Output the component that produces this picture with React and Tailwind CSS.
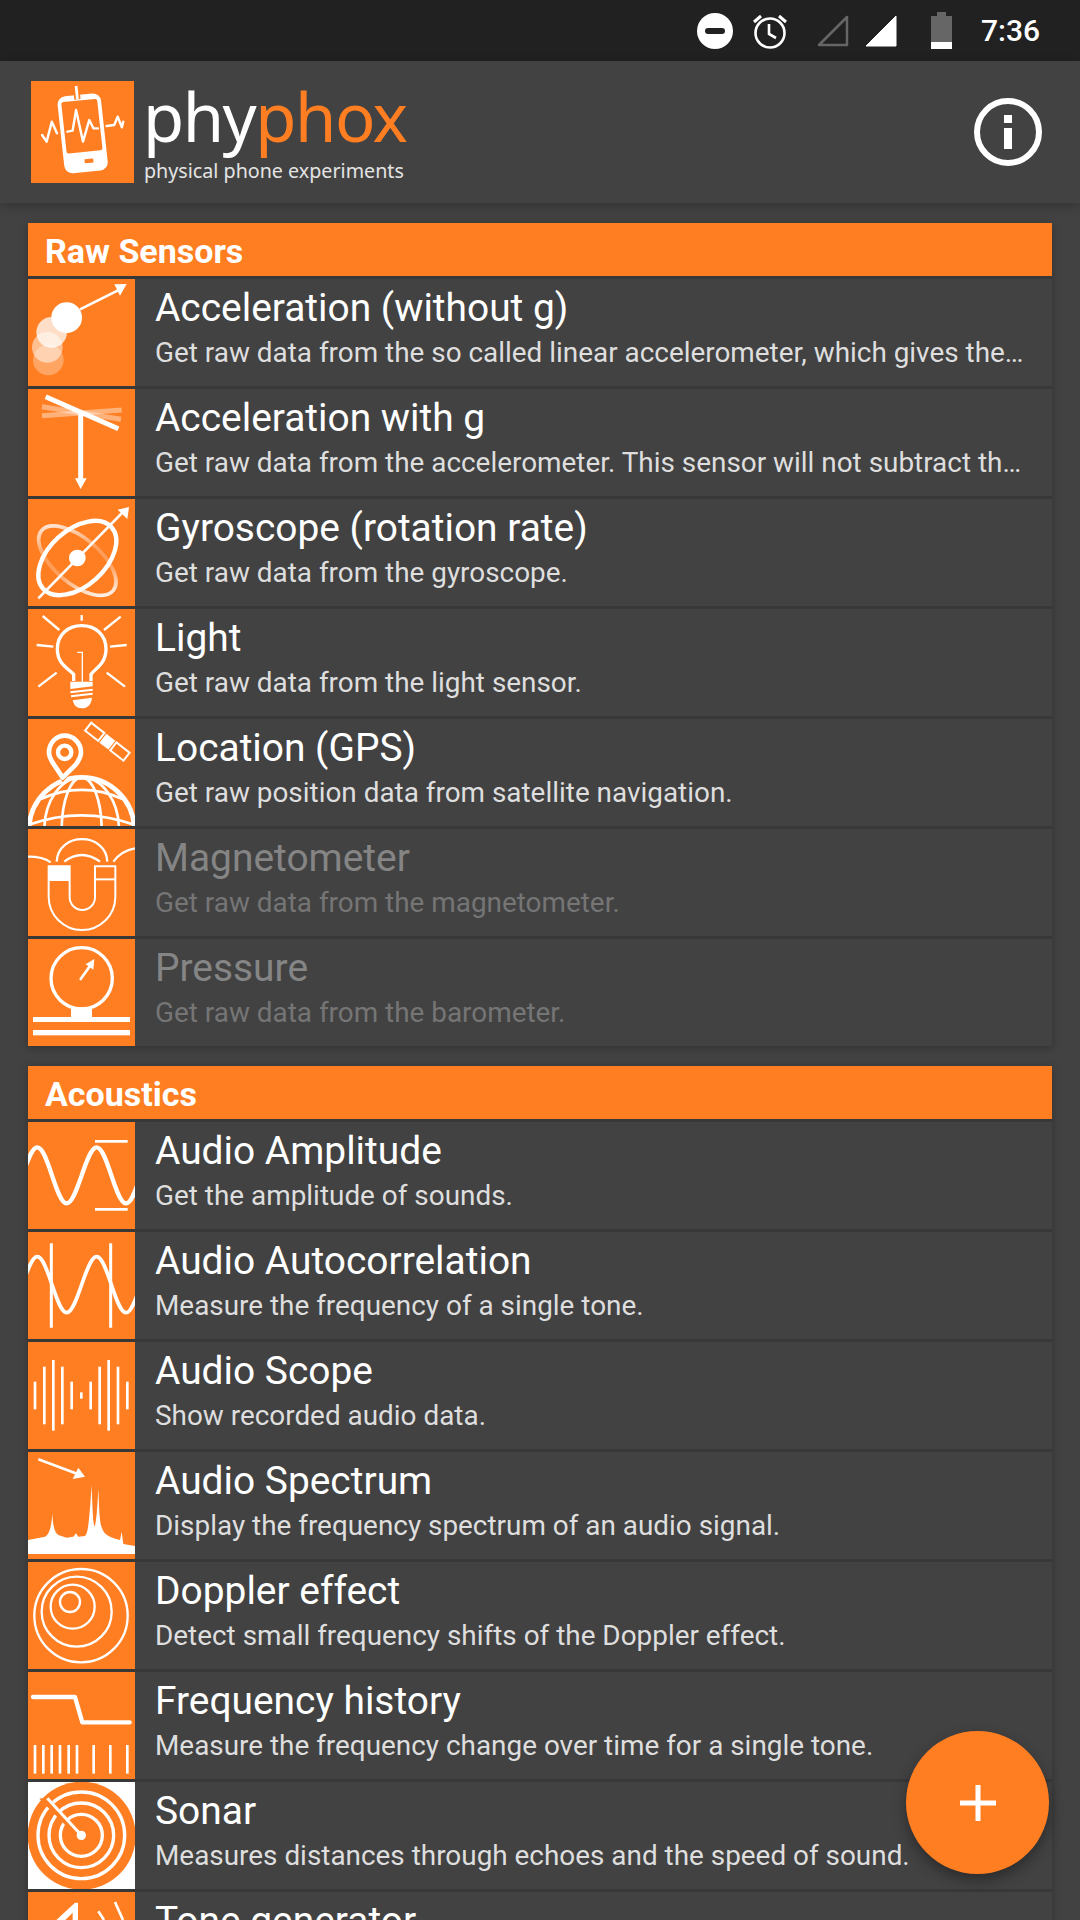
import React from 'react';

const W = 'white';

const Svg = ({ children, white }) => (
  <svg viewBox="0 0 321 321" className={`w-[107px] h-[107px] shrink-0 ${white ? 'bg-white' : 'bg-[#ff7e22]'}`}>
    {children}
  </svg>
);

const AccelIcon = () => (
  <Svg>
    <circle cx="61" cy="243" r="46" fill={W} opacity="0.3" />
    <circle cx="58" cy="205" r="46" fill={W} opacity="0.5" />
    <circle cx="71" cy="160" r="46" fill={W} opacity="0.75" />
    <circle cx="116" cy="116" r="46" fill={W} />
    <path d="M156 91 L276 31" stroke={W} strokeWidth="8" />
    <path d="M296 15 L259 16 L276 50 Z" fill={W} />
  </Svg>
);

const GravityIcon = () => (
  <Svg>
    <path d="M42 53 L279 91" stroke={W} strokeWidth="15" opacity="0.4" />
    <path d="M42 80 L281 63" stroke={W} strokeWidth="15" opacity="0.4" />
    <path d="M53 23 L271 119" stroke={W} strokeWidth="15" />
    <path d="M158 72 V270" stroke={W} strokeWidth="15" />
    <path d="M141 268 H176 L158 300 Z" fill={W} />
  </Svg>
);

const GyroIcon = () => (
  <Svg>
    <defs>
      <linearGradient id="gyroFade" gradientUnits="userSpaceOnUse" x1="40" y1="90" x2="250" y2="270">
        <stop offset="0" stopColor={W} stopOpacity="0.95" />
        <stop offset="0.42" stopColor={W} stopOpacity="0.25" />
        <stop offset="0.62" stopColor={W} stopOpacity="0.25" />
        <stop offset="1" stopColor={W} stopOpacity="1" />
      </linearGradient>
    </defs>
    <ellipse cx="148" cy="185" rx="140" ry="68" transform="rotate(40 148 185)" fill="none" stroke="url(#gyroFade)" strokeWidth="11" />
    <ellipse cx="148" cy="177" rx="138" ry="84" transform="rotate(-42 148 177)" fill="none" stroke={W} strokeWidth="13" />
    <path d="M31 298 L286 38" stroke={W} strokeWidth="8" />
    <path d="M303 24 L269 32 L298 60 Z" fill={W} />
    <circle cx="148" cy="177" r="25" fill={W} />
  </Svg>
);

const LightIcon = () => (
  <Svg>
    <path
      d="M137 216 V196 C120 178 88 165 88 120 C88 75 122 50 161 50 C200 50 234 75 234 120 C234 165 202 178 189 196 V216"
      fill="none"
      stroke={W}
      strokeWidth="10"
    />
    <path d="M148 130 H163 V222" fill="none" stroke={W} strokeWidth="4" />
    <path d="M127 218 H194 V232 L127 240 Z" fill={W} />
    <path d="M127 250 L194 242 M129 262 L194 254" stroke={W} strokeWidth="6" />
    <path d="M134 274 L192 266 C190 285 180 298 160 298 C146 298 138 290 134 274 Z" fill={W} />
    <path
      d="M44 21 L94 63 M161 18 V35 M278 23 L228 63 M26 108 L76 113 M296 108 L246 113 M86 191 L31 233 M236 191 L291 233"
      stroke={W}
      strokeWidth="7"
    />
  </Svg>
);

const LocationIcon = () => (
  <Svg>
    <g fill="none" stroke={W}>
      <circle cx="161" cy="333" r="158" strokeWidth="14" />
      <ellipse cx="161" cy="333" rx="112" ry="158" strokeWidth="8" />
      <ellipse cx="161" cy="333" rx="60" ry="158" strokeWidth="8" />
      <path d="M38 240 Q161 185 284 240" strokeWidth="8" />
      <path d="M0 318 Q161 260 321 318" strokeWidth="8" />
    </g>
    <path
      d="M104 190 L72 142 C62 126 56 114 56 100 C56 68 80 43 110 43 C140 43 166 68 166 100 C166 114 160 126 148 142 Z"
      fill="#ff7e22"
    />
    <path
      d="M104 176 L76 134 C68 122 63 112 63 100 C63 72 84 50 110 50 C136 50 159 72 159 100 C159 112 154 122 144 136 Z"
      fill="none"
      stroke={W}
      strokeWidth="14"
      strokeLinejoin="round"
    />
    <circle cx="110" cy="100" r="20" fill="none" stroke={W} strokeWidth="13" />
    <g transform="rotate(38 238 68)">
      <rect x="221" y="51" width="34" height="34" fill={W} />
      <rect x="165" y="53" width="50" height="30" fill="none" stroke={W} strokeWidth="6" />
      <rect x="261" y="53" width="50" height="30" fill="none" stroke={W} strokeWidth="6" />
    </g>
  </Svg>
);

const MagnetIcon = () => (
  <Svg>
    <g fill="none" stroke={W} strokeWidth="7">
      <path d="M86 98 C90 8 234 8 238 98" />
      <path d="M109 98 Q161 58 216 98" />
      <path d="M0 83 Q45 83 68 100" />
      <path d="M321 58 Q280 65 256 98" />
      <path d="M62 112 V203 A100 100 0 0 0 262 203 V112 H201 V205 A38 38 0 0 1 125 205 V112 Z" strokeWidth="6" />
      <path d="M202 151 H262" strokeWidth="6" />
    </g>
    <rect x="61" y="111" width="63" height="45" fill={W} />
  </Svg>
);

const PressureIcon = () => (
  <Svg>
    <circle cx="161" cy="118" r="92" fill="none" stroke={W} strokeWidth="10" />
    <path d="M158 120 L188 78" stroke={W} strokeWidth="8" strokeLinecap="round" />
    <path d="M199 60 L196 92 L173 76 Z" fill={W} />
    <rect x="129" y="205" width="63" height="30" fill={W} />
    <rect x="15" y="234" width="291" height="15" fill={W} />
    <rect x="15" y="273" width="291" height="16" fill={W} />
  </Svg>
);

const sine = 'M-61 244 C-29 244 -4 76 28 76 C60 76 84 244 116 244 C148 244 174 76 206 76 C238 76 262 244 294 244 C326 244 350 76 382 76';

const AmplitudeIcon = () => (
  <Svg>
    <path d={sine} fill="none" stroke={W} strokeWidth="13" />
    <path d="M201 58 H299 M201 262 H299" stroke={W} strokeWidth="8" />
  </Svg>
);

const AutocorrIcon = () => (
  <Svg>
    <path d={sine} fill="none" stroke={W} strokeWidth="11" transform="translate(0 -2)" />
    <path d="M70 34 V287 M248 34 V287" stroke={W} strokeWidth="9" />
  </Svg>
);

const scopeLines = [
  [21, 119, 202], [49, 74, 247], [76, 54, 266], [103, 74, 247], [131, 119, 202], [160, 151, 170],
  [188, 119, 202], [215, 74, 247], [242, 54, 266], [270, 74, 247], [298, 119, 202],
];

const ScopeIcon = () => (
  <Svg>
    {scopeLines.map(([x, a, b]) => (
      <path key={x} d={`M${x} ${a} V${b}`} stroke={W} strokeWidth="8" />
    ))}
  </Svg>
);

const SpectrumIcon = () => (
  <Svg>
    <path d="M31 22 L155 68" stroke={W} strokeWidth="8" />
    <path d="M171 74 L151 47 L134 81 Z" fill={W} />
    <path
      d="M0 264 L51 254 C60 250 70 235 73 184 C75 230 82 242 91 249 L116 257 L136 254 L144 244 L151 254 L171 252 C178 245 182 235 191 99 C194 190 196 215 200 224 C205 210 208 170 211 109 C214 190 216 215 222 228 C228 245 236 254 276 264 L281 239 L286 276 L321 282 V306 H0 Z"
      fill={W}
    />
  </Svg>
);

const DopplerIcon = () => (
  <Svg>
    <g fill="none" stroke={W} strokeWidth="7">
      <circle cx="159" cy="161" r="140" />
      <circle cx="146" cy="149" r="105" />
      <circle cx="134" cy="134" r="66" />
      <circle cx="126" cy="120" r="30" />
    </g>
  </Svg>
);

const ticks = [21, 46, 71, 96, 122, 147, 197, 247, 298];

const HistoryIcon = () => (
  <Svg>
    <path d="M15 75 H141 L163 151 H305" fill="none" stroke={W} strokeWidth="13" strokeLinecap="round" strokeLinejoin="round" />
    {ticks.map((x) => (
      <path key={x} d={`M${x} 219 V305`} stroke={W} strokeWidth="8" />
    ))}
  </Svg>
);

const SonarIcon = () => (
  <Svg white>
    <circle cx="161" cy="161" r="162" fill="#ff7e22" />
    <g fill="none" stroke={W} strokeWidth="10">
      <circle cx="160" cy="160" r="130" />
      <circle cx="160" cy="160" r="97" />
      <circle cx="160" cy="160" r="63" />
    </g>
    <path d="M62 45 L34 50 L112 130 L160 160 Z" fill="#ff7e22" />
    <path d="M58 49 L160 160" stroke={W} strokeWidth="9" />
    <circle cx="160" cy="160" r="14" fill={W} />
  </Svg>
);

const ToneIcon = () => (
  <Svg>
    <path d="M85 84 L141 32 H150 V84 H134 V62 L112 84 Z" fill={W} />
    <path d="M211 58 L228 84 M261 30 L285 84" stroke={W} strokeWidth="8" />
  </Svg>
);

const sections = [
  {
    title: 'Raw Sensors',
    rows: [
      { icon: AccelIcon, name: 'Acceleration (without g)', desc: 'Get raw data from the so called linear accelerometer, which gives the acceleration without gravity.' },
      { icon: GravityIcon, name: 'Acceleration with g', desc: 'Get raw data from the accelerometer. This sensor will not subtract the gravity.' },
      { icon: GyroIcon, name: 'Gyroscope (rotation rate)', desc: 'Get raw data from the gyroscope.' },
      { icon: LightIcon, name: 'Light', desc: 'Get raw data from the light sensor.' },
      { icon: LocationIcon, name: 'Location (GPS)', desc: 'Get raw position data from satellite navigation.' },
      { icon: MagnetIcon, name: 'Magnetometer', desc: 'Get raw data from the magnetometer.', off: true },
      { icon: PressureIcon, name: 'Pressure', desc: 'Get raw data from the barometer.', off: true },
    ],
  },
  {
    title: 'Acoustics',
    rows: [
      { icon: AmplitudeIcon, name: 'Audio Amplitude', desc: 'Get the amplitude of sounds.' },
      { icon: AutocorrIcon, name: 'Audio Autocorrelation', desc: 'Measure the frequency of a single tone.' },
      { icon: ScopeIcon, name: 'Audio Scope', desc: 'Show recorded audio data.' },
      { icon: SpectrumIcon, name: 'Audio Spectrum', desc: 'Display the frequency spectrum of an audio signal.' },
      { icon: DopplerIcon, name: 'Doppler effect', desc: 'Detect small frequency shifts of the Doppler effect.' },
      { icon: HistoryIcon, name: 'Frequency history', desc: 'Measure the frequency change over time for a single tone.' },
      { icon: SonarIcon, name: 'Sonar', desc: 'Measures distances through echoes and the speed of sound.' },
      { icon: ToneIcon, name: 'Tone generator', desc: 'Generate a tone with a given frequency.' },
    ],
  },
];

const StatusBar = () => (
  <div className="h-[61px] shrink-0 bg-[#212121] flex items-center justify-end">
    <svg viewBox="0 0 36 36" className="w-[36px] h-[36px] mr-[19px]">
      <circle cx="18" cy="18" r="18" fill={W} />
      <rect x="8" y="15" width="20" height="6" rx="3" fill="#212121" />
    </svg>
    <svg viewBox="0 0 36 36" className="w-[36px] h-[36px] mr-[29px]">
      <circle cx="18" cy="20" r="14.5" fill="none" stroke={W} strokeWidth="2.6" />
      <path d="M17 11 V21 L24 25" fill="none" stroke={W} strokeWidth="2.6" />
      <path d="M2 9 L9 3 M34 9 L27 3" stroke={W} strokeWidth="3" />
    </svg>
    <svg viewBox="0 0 32 32" className="w-[32px] h-[32px] mr-[16px]">
      <path d="M2 30 L30 2 V30 Z" fill="none" stroke="#666" strokeWidth="2.5" strokeLinejoin="round" />
    </svg>
    <svg viewBox="0 0 32 32" className="w-[32px] h-[32px] mr-[34px]">
      <path d="M1 31 L31 1 V31 Z" fill={W} stroke={W} strokeLinejoin="round" />
    </svg>
    <div className="w-[21px] h-[37px] flex flex-col items-center mr-[29px]">
      <div className="w-[9px] h-[4px] bg-[#666]" />
      <div className="w-[21px] h-[26px] bg-[#666]" />
      <div className="w-[21px] h-[7px] bg-white" />
    </div>
    <span className="text-[30px] font-medium text-white mr-[40px] leading-none">7:36</span>
  </div>
);

const Logo = () => (
  <svg viewBox="0 0 297 306" preserveAspectRatio="none" className="w-[103px] h-[102px] shrink-0 bg-[#ff7e22]">
    <g transform="rotate(-6 149 157)">
      <rect x="86" y="41" width="126" height="232" rx="24" fill={W} />
      <rect x="97" y="58" width="104" height="155" rx="6" fill="#ff7e22" />
      <rect x="146" y="235" width="25" height="12" fill="#ff7e22" />
    </g>
    <path d="M130 15 L134 55" stroke="#ff7e22" strokeWidth="18" />
    <path d="M130 15 L134 55" stroke={W} strokeWidth="8" />
    <g fill="none" stroke={W} strokeWidth="7" strokeLinejoin="round" strokeLinecap="round">
      <path d="M105 152 L120 149 L130 87 L150 182 L168 117 L180 142 L193 142" />
      <path d="M32 162 L45 182 L60 122 L75 157" />
      <path d="M218 135 L240 132 L250 107 L262 139 L266 122" />
    </g>
  </svg>
);

const Toolbar = () => (
  <div className="relative z-10 h-[142px] shrink-0 bg-[#424242] shadow-[0_3px_10px_rgba(0,0,0,0.22)] flex items-center pl-[31px] pr-[38px] justify-between">
    <div className="flex items-center">
      <Logo />
      <div className="ml-[9px] flex flex-col font-['Noto_Sans',sans-serif]">
        <div className="text-[67px] leading-[72px] tracking-[-1.5px] text-white">
          phy<span className="text-[#ff7e22]">phox</span>
        </div>
        <div className="text-[19.7px] leading-[26px] text-[#e4e4e4] mt-[6px] ml-[1px]">physical phone experiments</div>
      </div>
    </div>
    <svg viewBox="0 0 68 68" className="w-[68px] h-[68px]">
      <circle cx="34" cy="34" r="31" fill="none" stroke={W} strokeWidth="6" />
      <rect x="30" y="17" width="8" height="8" fill={W} />
      <rect x="30" y="30" width="8" height="21" fill={W} />
    </svg>
  </div>
);

const Row = ({ row }) => {
  const Icon = row.icon;
  return (
    <div className="h-[107px] shrink-0 flex bg-[#424242]">
      <Icon />
      <div className="flex-1 min-w-0 pl-[20px] pr-[24px] pt-[6px]">
        <div className={`text-[38.9px] leading-[45px] ${row.off ? 'text-[#858585]' : 'text-white'}`}>{row.name}</div>
        <div className={`text-[27.9px] leading-[36px] mt-[5px] truncate ${row.off ? 'text-[#757575]' : 'text-[#dedede]'}`}>{row.desc}</div>
      </div>
    </div>
  );
};

const Section = ({ section }) => (
  <div className="flex flex-col gap-[3px] bg-[#383838] shadow-[0_2px_8px_rgba(0,0,0,0.25)]">
    <div className="h-[53px] bg-[#ff7e22] text-white font-bold text-[34px] flex items-center pl-[17px] pt-[4px]">{section.title}</div>
    {section.rows.map((row) => (
      <Row key={row.name} row={row} />
    ))}
  </div>
);

export default function App() {
  return (
    <div className="relative w-[1080px] h-[1920px] overflow-hidden bg-[#424242] flex flex-col font-['Roboto',sans-serif]">
      <StatusBar />
      <Toolbar />
      <div className="flex flex-col gap-[20px] pt-[20px] px-[28px]">
        {sections.map((s) => (
          <Section key={s.title} section={s} />
        ))}
      </div>
      <button className="absolute left-[906px] top-[1731px] w-[143px] h-[143px] rounded-full bg-[#ff7e22] shadow-[0_6px_14px_rgba(0,0,0,0.35)] flex items-center justify-center">
        <svg viewBox="0 0 36 36" className="w-[36px] h-[36px]">
          <path d="M15.5 0 H20.5 V15.5 H36 V20.5 H20.5 V36 H15.5 V20.5 H0 V15.5 H15.5 Z" fill={W} />
        </svg>
      </button>
    </div>
  );
}
